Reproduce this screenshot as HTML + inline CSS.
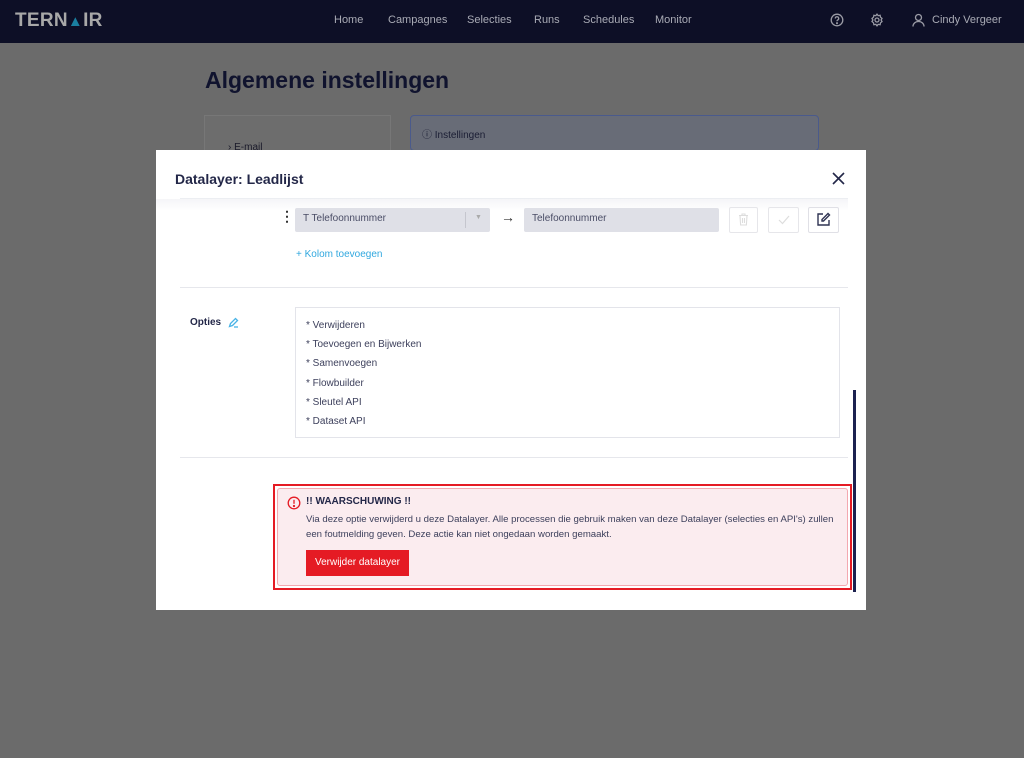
<!DOCTYPE html>
<html><head><meta charset="utf-8"><style>
*{box-sizing:border-box;margin:0;padding:0}
body{width:1024px;height:758px;overflow:hidden;background:#6b6b6b;font-family:"Liberation Sans",sans-serif;position:relative}
.nav{position:absolute;left:0;top:0;width:1024px;height:43px;background:#0d0f26;color:#a9abb5;font-size:11px}
.nav .logo{position:absolute;left:15px;top:10px;font-size:19px;font-weight:bold;color:#a8a8a8;letter-spacing:0.3px}
.nav .m{position:absolute;top:14px}
.a{position:absolute}
.t{position:absolute;white-space:nowrap}
</style></head><body>
<div class="nav">
<div class="logo">TERN<span style="font-size:15px;color:#1a7fa0">&#9650;</span>IR</div>
<span class="m" style="left:334px">Home</span>
<span class="m" style="left:388px">Campagnes</span>
<span class="m" style="left:467px">Selecties</span>
<span class="m" style="left:534px">Runs</span>
<span class="m" style="left:583px">Schedules</span>
<span class="m" style="left:655px">Monitor</span>
<svg class="a" style="left:830px;top:13px" width="14" height="14" viewBox="0 0 14 14" fill="none" stroke="#9a9ba5" stroke-width="1.3"><circle cx="7" cy="7" r="5.8"/><path d="M5.3 5.5a1.7 1.7 0 1 1 2.4 1.5c-.6.3-.7.7-.7 1.2"/><circle cx="7" cy="10.2" r=".4" fill="#9a9ba5"/></svg>
<svg class="a" style="left:870px;top:13px" width="14" height="14" viewBox="0 0 14 14" fill="none" stroke="#9a9ba5" stroke-width="1.3"><circle cx="7" cy="7" r="2"/><path d="M7 1.2l1.2 1.5 1.9-.4.4 1.9 1.5 1.2-.9 1.6.9 1.6-1.5 1.2-.4 1.9-1.9-.4L7 12.8l-1.2-1.5-1.9.4-.4-1.9L2 8.6 2.9 7 2 5.4l1.5-1.2.4-1.9 1.9.4z"/></svg>
<svg class="a" style="left:912px;top:13px" width="13" height="14" viewBox="0 0 13 14" fill="none" stroke="#9a9ba5" stroke-width="1.3"><circle cx="6.5" cy="4.5" r="3"/><path d="M1 13.5c0-3 2.5-5 5.5-5s5.5 2 5.5 5"/></svg>
<span class="m" style="left:932px">Cindy Vergeer</span>
</div>
<div class="t" style="left:205px;top:67px;font-size:23px;font-weight:bold;color:#10132e">Algemene instellingen</div>
<div class="a" style="left:204px;top:115px;width:187px;height:40px;background:#6d6d6d;border:1px solid #777"></div>
<div class="t" style="left:228px;top:142px;font-size:10px;color:#1a1a2a">&#8250; E-mail</div>
<div class="a" style="left:410px;top:115px;width:409px;height:36px;background:#686c77;border:1px solid #4a5a8c;border-radius:4px"></div>
<div class="t" style="left:422px;top:126px;font-size:10px;color:#1a1d33">&#9432; Instellingen</div>

<div class="a" style="left:156px;top:150px;width:710px;height:460px;background:#fff">
<div class="t" style="left:19px;top:21px;font-size:14px;font-weight:bold;color:#232748">Datalayer: Leadlijst</div>
<svg class="a" style="left:676px;top:22px" width="13" height="13" viewBox="0 0 13 13" stroke="#232748" stroke-width="1.6"><path d="M1 1l11 11M12 1L1 12"/></svg>
<div class="a" style="left:24px;top:48px;width:668px;height:1px;background:#eceef2"></div>
<div class="a" style="left:0px;top:49px;width:692px;height:12px;background:linear-gradient(#f5f5f8,rgba(255,255,255,0))"></div>
<div class="t" style="left:124px;top:58px;font-size:14px;font-weight:bold;color:#333">&#8942;</div>
<div class="a" style="left:139px;top:58px;width:195px;height:24px;background:#dfe0e7;border-radius:2px"></div>
<div class="a" style="left:309px;top:62px;width:1px;height:16px;background:#c5c6ce"></div>
<div class="t" style="left:319px;top:64px;font-size:7px;color:#aaa">&#9660;</div>
<div class="t" style="left:147px;top:63px;font-size:10px;color:#4a4d66">T Telefoonnummer</div>
<div class="t" style="left:345px;top:59px;font-size:14px;color:#333">&#8594;</div>
<div class="a" style="left:368px;top:58px;width:195px;height:24px;background:#dfe0e7;border-radius:2px"></div>
<div class="t" style="left:376px;top:63px;font-size:10px;color:#4a4d66">Telefoonnummer</div>
<div class="a" style="left:573px;top:57px;width:29px;height:26px;border:1px solid #e6e6ea;border-radius:2px"></div>
<svg class="a" style="left:582px;top:63px" width="11" height="13" viewBox="0 0 11 13" fill="none" stroke="#ddd" stroke-width="1.1"><path d="M1 2.5h9M4 2.5V1h3v1.5M2 2.5l.6 9.5h5.8L9 2.5M4.5 5v5M6.5 5v5"/></svg>
<div class="a" style="left:612px;top:57px;width:31px;height:26px;border:1px solid #e6e6ea;border-radius:2px"></div>
<svg class="a" style="left:622px;top:65px" width="12" height="10" viewBox="0 0 12 10" fill="none" stroke="#ddd" stroke-width="1.2"><path d="M1 5l3.5 3.5L11 1"/></svg>
<div class="a" style="left:652px;top:57px;width:31px;height:26px;border:1px solid #e0e0e6;border-radius:2px"></div>
<svg class="a" style="left:660px;top:62px" width="15" height="15" viewBox="0 0 15 15" fill="none" stroke="#2f3352" stroke-width="1.4"><path d="M7 2H2v11h11V8"/><path d="M12 1.5l1.5 1.5L7.5 9H6V7.5z"/></svg>
<div class="t" style="left:140px;top:99px;font-size:10px;color:#31a8df">+ Kolom toevoegen</div>
<div class="a" style="left:24px;top:137px;width:668px;height:1px;background:#e6e7ec"></div>
<div class="t" style="left:34px;top:167px;font-size:10px;font-weight:bold;color:#232748">Opties</div>
<svg class="a" style="left:72px;top:167px" width="11" height="11" viewBox="0 0 11 11" fill="none" stroke="#49b3e6" stroke-width="1.3"><path d="M1.5 9.5l1-3 5-5 2 2-5 5z"/><path d="M6 10h4"/></svg>
<div class="a" style="left:139px;top:157px;width:545px;height:131px;border:1px solid #e3e4ea"></div>
<div class="t" style="left:150px;top:166px;font-size:10px;color:#3d405c;line-height:19.2px">* Verwijderen<br>* Toevoegen en Bijwerken<br>* Samenvoegen<br>* Flowbuilder<br>* Sleutel API<br>* Dataset API</div>
<div class="a" style="left:24px;top:307px;width:668px;height:1px;background:#e6e7ec"></div>
<div class="a" style="left:117px;top:334px;width:579px;height:106px;border:2px solid #e51b24"></div>
<div class="a" style="left:121px;top:338px;width:571px;height:98px;background:#fbecef;border:1px solid #f3a8b0;border-radius:3px"></div>
<svg class="a" style="left:131px;top:346px" width="14" height="14" viewBox="0 0 14 14" fill="none" stroke="#e51b24" stroke-width="1.3"><circle cx="7" cy="7" r="5.8"/><path d="M7 3.8v4"/><circle cx="7" cy="10" r=".5" fill="#e51b24"/></svg>
<div class="t" style="left:150px;top:346px;font-size:10px;font-weight:bold;color:#232748">!! WAARSCHUWING !!</div>
<div class="t" style="left:150px;top:362px;font-size:9.6px;color:#3d405c;line-height:15px">Via deze optie verwijderd u deze Datalayer. Alle processen die gebruik maken van deze Datalayer (selecties en API's) zullen<br>een foutmelding geven. Deze actie kan niet ongedaan worden gemaakt.</div>
<div class="a" style="left:150px;top:400px;width:103px;height:26px;background:#e51b24;color:#fff;font-size:10px;line-height:26px;text-align:center">Verwijder datalayer</div>
<div class="a" style="left:697px;top:240px;width:3px;height:202px;background:#1d2250"></div>
</div>
</body></html>
